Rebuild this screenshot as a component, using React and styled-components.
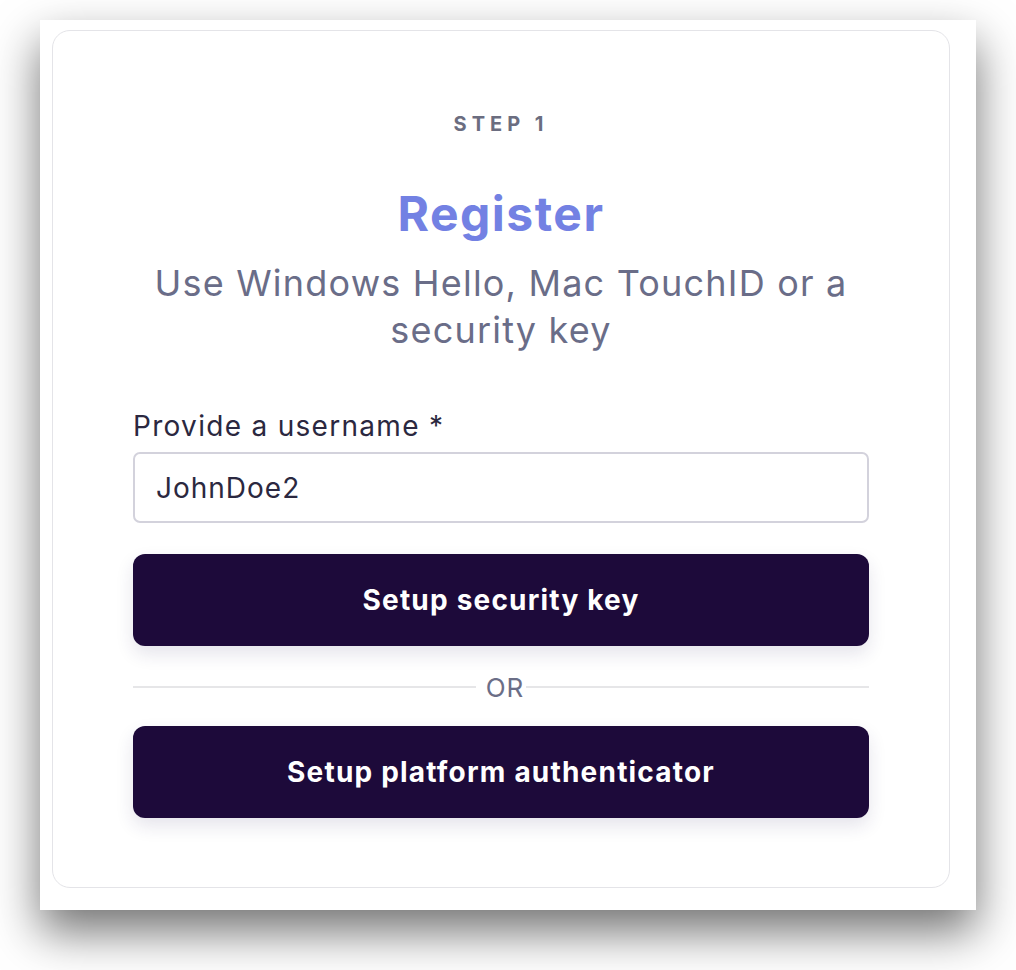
import React, { useState } from "react";
import styled, { createGlobalStyle } from "styled-components";

const GlobalStyle = createGlobalStyle`
  body {
    margin: 0;
    background: #ffffff;
    font-family: Inter, "Noto Sans", sans-serif;
  }
`;

const Page = styled.div`
  padding: 20px 40px 60px;
`;

const Window = styled.div`
  width: 936px;
  height: 890px;
  box-sizing: border-box;
  background: #ffffff;
  padding: 10px 26px 22px 12px;
  box-shadow: 0 22px 44px rgba(0, 0, 0, 0.55);
`;

const Card = styled.div`
  box-sizing: border-box;
  height: 100%;
  border: 1px solid #e4e4e8;
  border-radius: 18px;
  padding: 81px 80px 0;
  display: flex;
  flex-direction: column;
  align-items: stretch;
`;

const Step = styled.div`
  text-align: center;
  font-size: 20px;
  line-height: 24px;
  font-weight: 700;
  letter-spacing: 5px;
  color: #6b6d80;
`;

const Title = styled.h1`
  margin: 50px 0 0;
  text-align: center;
  font-size: 48px;
  line-height: 56px;
  font-weight: 700;
  letter-spacing: 1.5px;
  color: #7381e3;
`;

const Subtitle = styled.p`
  margin: 18px auto 0;
  max-width: 736px;
  text-align: center;
  font-size: 36px;
  line-height: 47px;
  font-weight: 400;
  letter-spacing: 1.2px;
  color: #6a6d88;
`;

const Label = styled.label`
  margin-top: 56px;
  font-size: 28px;
  line-height: 32px;
  letter-spacing: 1.3px;
  color: #2b2840;
`;

const Input = styled.input`
  margin-top: 10px;
  box-sizing: border-box;
  width: 100%;
  height: 71px;
  padding: 0 21px;
  border: 2px solid #d3d2dc;
  border-radius: 7px;
  font-family: inherit;
  font-size: 28px;
  letter-spacing: 1px;
  color: #2b2840;
  outline: none;
`;

const Button = styled.button`
  margin-top: ${(p) => p.$gap}px;
  height: 92px;
  border: none;
  border-radius: 12px;
  background: #1d0a3a;
  color: #ffffff;
  font-family: inherit;
  font-size: 28px;
  font-weight: 700;
  letter-spacing: 1.2px;
  box-shadow: 0 8px 18px rgba(40, 30, 90, 0.12);
  cursor: pointer;
`;

const Divider = styled.div`
  margin-top: 29px;
  display: flex;
  align-items: center;
  height: 24px;
  font-size: 26px;
  letter-spacing: 1px;
  color: #6b6e87;

  &::before,
  &::after {
    content: "";
    flex: 1;
    height: 2px;
    background: #e6e6e8;
  }

  &::before {
    margin-right: 10px;
  }

  &::after {
    margin-left: 2px;
  }
`;

const App = () => {
  const [username, setUsername] = useState("JohnDoe2");

  return (
    <>
      <GlobalStyle />
      <Page>
        <Window>
          <Card>
            <Step>STEP 1</Step>
            <Title>Register</Title>
            <Subtitle>Use Windows Hello, Mac TouchID or a security key</Subtitle>
            <Label htmlFor="username">Provide a username *</Label>
            <Input id="username" value={username} onChange={(e) => setUsername(e.target.value)} />
            <Button $gap={31}>Setup security key</Button>
            <Divider>OR</Divider>
            <Button $gap={27}>Setup platform authenticator</Button>
          </Card>
        </Window>
      </Page>
    </>
  );
};

export default App;
